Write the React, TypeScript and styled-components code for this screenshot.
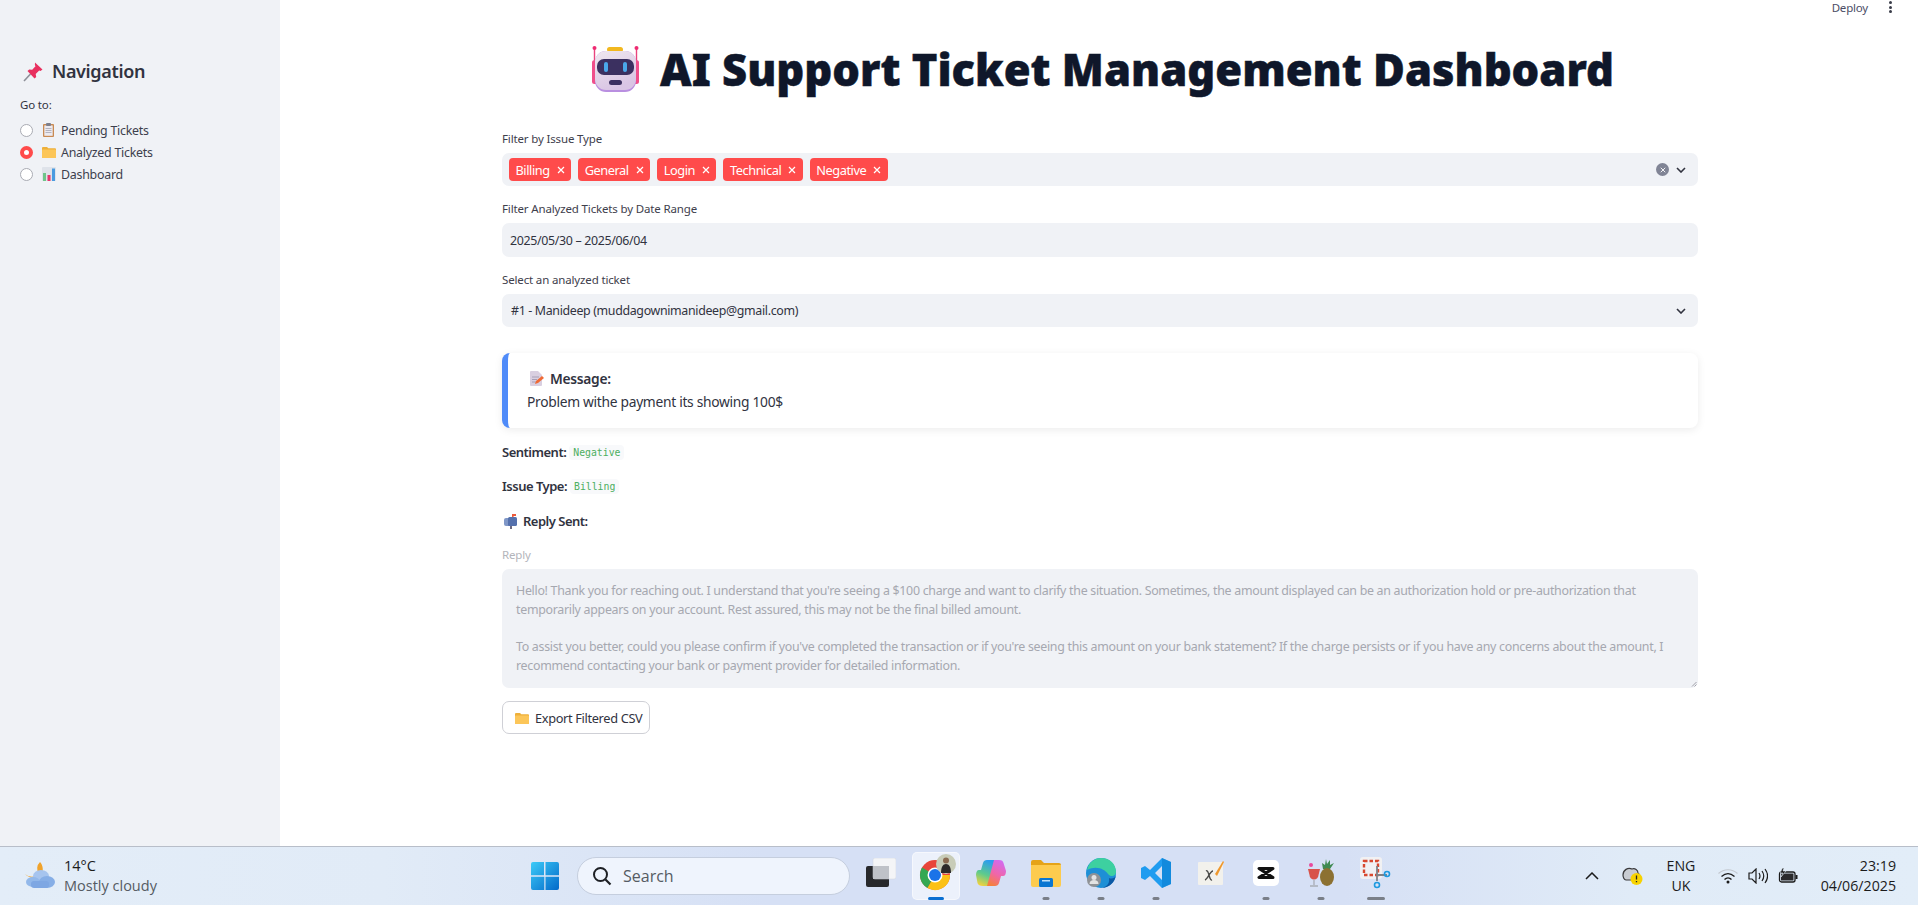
import React from 'react';
import styled, { createGlobalStyle } from 'styled-components';

const GlobalStyle = createGlobalStyle`
  html, body {
    margin: 0;
    padding: 0;
    background: #fff;
    overflow: hidden;
  }
  body {
    font-family: "Noto Sans", "Open Sans", sans-serif;
  }
`;

const Page = styled.div`
  width: 1918px;
  height: 905px;
  display: flex;
  flex-direction: column;
`;

const Upper = styled.div`
  flex: 1;
  display: flex;
  min-height: 0;
`;

const Sidebar = styled.aside`
  width: 280px;
  background: #f0f2f6;
  padding: 57px 0 0 20px;
  box-sizing: border-box;
  color: #31333f;
`;

const NavTitle = styled.div`
  display: flex;
  align-items: center;
  gap: 8px;
  height: 28px;
  margin-left: 3px;
  font-size: 18px;
  font-weight: 600;
  letter-spacing: -0.35px;
`;

const GoTo = styled.div`
  margin-top: 12px;
  font-size: 11.5px;
  line-height: 16px;
  letter-spacing: -0.15px;
`;

const RadioList = styled.div`
  margin-top: 6px;
  display: flex;
  flex-direction: column;
`;

const RadioRow = styled.div`
  height: 22px;
  display: flex;
  align-items: center;
  font-size: 12.4px;
  letter-spacing: -0.25px;
  color: #3d3f4d;
`;

const RadioDot = styled.span<{ $on?: boolean }>`
  width: 13px;
  height: 13px;
  border-radius: 50%;
  box-sizing: border-box;
  background: #fff;
  border: ${(p) => (p.$on ? '4px solid #ff4b4b' : '1px solid #a9abb3')};
  margin-right: 8px;
  flex: none;
`;

const RadioIcon = styled.span`
  width: 15px;
  display: flex;
  justify-content: center;
  margin-right: 5px;
`;

const Main = styled.main`
  flex: 1;
  display: flex;
  flex-direction: column;
  min-width: 0;
`;

const TopBar = styled.div`
  height: 14px;
  display: flex;
  justify-content: flex-end;
  align-items: center;
  padding-right: 26px;
  gap: 21px;
  font-size: 11.5px;
  letter-spacing: -0.2px;
  color: #4b4d66;
`;

const Dots = styled.div`
  display: flex;
  flex-direction: column;
  gap: 1.5px;
  & > span {
    width: 3px;
    height: 3px;
    border-radius: 50%;
    background: #3a3c48;
  }
`;

const Content = styled.div`
  width: 1196px;
  margin-left: 222px;
  color: #31333f;
`;

const Title = styled.h1`
  margin: 29px 0 0;
  height: 52px;
  display: flex;
  align-items: center;
  justify-content: center;
  gap: 21px;
  font-size: 43.5px;
  font-weight: 900;
  color: #0f172a;
  white-space: nowrap;
  -webkit-text-stroke: 0.5px #0f172a;
  padding-left: 6px;
`;

const FieldLabel = styled.div<{ $muted?: boolean }>`
  font-size: 11.5px;
  line-height: 16px;
  letter-spacing: -0.15px;
  color: ${(p) => (p.$muted ? '#b3b5bb' : '#3e404c')};
`;

const Field = styled.div<{ $top: number }>`
  margin-top: ${(p) => p.$top}px;
`;

const InputBox = styled.div<{ $h: number; $pad?: number }>`
  margin-top: 6px;
  height: ${(p) => p.$h}px;
  background: #f0f2f6;
  border-radius: 7px;
  display: flex;
  align-items: center;
  padding: 0 12px 0 ${(p) => p.$pad ?? 8}px;
  font-size: 12.4px;
  letter-spacing: -0.34px;
  color: #31333f;
`;

const Tags = styled.div`
  flex: 1;
  display: flex;
  gap: 7px;
`;

const Tag = styled.span`
  height: 23px;
  background: #ff4b4b;
  color: #fff;
  border-radius: 4px;
  display: flex;
  align-items: center;
  gap: 7px;
  padding: 0 6.5px;
  font-size: 12.8px;
  letter-spacing: -0.45px;
`;

const Grow = styled.span`
  flex: 1;
`;

const ClearBtn = styled.span`
  width: 13px;
  height: 13px;
  border-radius: 50%;
  background: #808495;
  display: flex;
  align-items: center;
  justify-content: center;
  margin-right: 7px;
`;

const Card = styled.section`
  margin-top: 26px;
  height: 75px;
  box-sizing: border-box;
  border-left: 6px solid #4f8bf9;
  border-radius: 8px;
  background: #fff;
  box-shadow: 0 2px 8px rgba(0, 0, 0, 0.08);
  padding: 15px 0 0 19px;
  font-size: 13.8px;
  letter-spacing: -0.3px;
`;

const CardHead = styled.div`
  display: flex;
  align-items: center;
  gap: 6px;
  margin-left: 3px;
  height: 20px;
  font-weight: 600;
`;

const CardText = styled.div`
  margin-top: 4px;
  line-height: 20px;
`;

const InfoRow = styled.div<{ $top: number; $inset?: boolean }>`
  margin-top: ${(p) => p.$top}px;
  margin-left: ${(p) => (p.$inset ? 2 : 0)}px;
  height: 20px;
  display: flex;
  align-items: center;
  gap: ${(p) => (p.$inset ? 5 : 3)}px;
  font-size: 13px;
  font-weight: 600;
  letter-spacing: -0.5px;
`;

const Code = styled.code`
  background: #f8f9fb;
  color: #4cae60;
  border-radius: 4px;
  padding: 2px 4px;
  font-family: "DejaVu Sans Mono", "Liberation Mono", monospace;
  font-size: 9.8px;
  font-weight: 400;
  letter-spacing: 0;
`;

const ReplyBox = styled.div`
  position: relative;
  margin-top: 6px;
  height: 119px;
  box-sizing: border-box;
  background: #f0f2f6;
  border-radius: 7px;
  padding: 13px 14px;
  font-size: 12.4px;
  line-height: 18.7px;
  letter-spacing: -0.29px;
  color: #a6a8b0;
  white-space: pre-line;
`;

const ResizeGrip = styled.svg`
  position: absolute;
  right: 1px;
  bottom: 1px;
`;

const ExportButton = styled.button`
  margin-top: 13px;
  height: 33px;
  width: 148px;
  box-sizing: border-box;
  border: 1px solid #cfd0d6;
  border-radius: 7px;
  background: #fff;
  display: flex;
  align-items: center;
  gap: 6px;
  padding: 0 0 0 12px;
  font-family: inherit;
  font-size: 12.8px;
  letter-spacing: -0.35px;
  color: #31333f;
`;

const Taskbar = styled.footer`
  height: 59px;
  flex: none;
  box-sizing: border-box;
  border-top: 1px solid #b8bec9;
  background: linear-gradient(90deg, #e3edf8 0%, #e1ebf7 20%, #d6e0f5 40%, #d6e0f5 70%, #e0ebf7 85%, #e2edf8 100%);
  display: flex;
  align-items: center;
  font-family: "Open Sans", "Noto Sans", sans-serif;
  color: #1b1b1b;
`;

const Weather = styled.div`
  width: 530px;
  flex: none;
  box-sizing: border-box;
  padding-left: 25px;
  display: flex;
  align-items: center;
  gap: 9px;
`;

const WeatherText = styled.div`
  font-size: 14.5px;
  line-height: 20px;
  & > span {
    display: block;
    color: #555b63;
  }
`;

const TaskCenter = styled.div`
  display: flex;
  align-items: center;
  height: 100%;
`;

const StartCell = styled.div`
  width: 30px;
  margin-right: 17px;
  display: flex;
`;

const SearchPill = styled.div`
  width: 273px;
  height: 38px;
  box-sizing: border-box;
  border: 1px solid #c5cede;
  border-radius: 19px;
  background: #eff4fd;
  display: flex;
  align-items: center;
  gap: 11px;
  padding-left: 14px;
  font-size: 16px;
  color: #555b63;
  margin-right: 3px;
`;

const AppCell = styled.div<{ $active?: boolean }>`
  width: 55px;
  height: 48px;
  box-sizing: border-box;
  position: relative;
  display: flex;
  align-items: center;
  justify-content: center;
  padding-bottom: 6px;
  &::before {
    content: '';
    display: ${(p) => (p.$active ? 'block' : 'none')};
    position: absolute;
    left: 3.5px;
    right: 3.5px;
    top: 0;
    bottom: 0;
    border-radius: 5px;
    background: rgba(255, 255, 255, 0.55);
    border: 1px solid rgba(255, 255, 255, 0.5);
  }
  & > svg {
    position: relative;
  }
`;

const RunDot = styled.span<{ $active?: boolean; $wide?: boolean }>`
  position: absolute;
  bottom: 0;
  left: 50%;
  transform: translateX(-50%);
  height: 3px;
  width: ${(p) => (p.$active ? 16 : p.$wide ? 18 : 7)}px;
  border-radius: 2px;
  background: ${(p) => (p.$active ? '#0a6fd1' : '#7a7f88')};
`;

const Tray = styled.div`
  flex: 1;
  display: flex;
  align-items: center;
  padding-left: 182px;
`;

const ChevronCell = styled.div`
  margin-right: 23px;
  display: flex;
`;

const TrayLang = styled.div`
  width: 44px;
  margin: 0 15px 0 16px;
  text-align: center;
  font-size: 14.2px;
  line-height: 20px;
`;

const TrayIcons = styled.div`
  display: flex;
  align-items: center;
  gap: 10px;
`;

const Clock = styled.div`
  margin-left: auto;
  padding-right: 22px;
  text-align: right;
  font-size: 14.2px;
  line-height: 20px;
`;

/* drawings of the emoji and the taskbar icons */
const PinIcon = () => (
  <svg width="21" height="21" viewBox="0 0 21 21">
    <path d="M1 20l6.500-7" stroke="#8d8f98" strokeWidth="1.600" />
    <path d="M12 1.500l7.500 7-2 1.500-1.300-.5-3.500 3.500.5 3-1.700 1.500L4.500 10l1.700-1.600 3 .4 3.300-3.500-.6-1.400z" fill="#e8305f" />
  </svg>
);
const ClipboardIcon = () => (
  <svg width="11" height="14" viewBox="0 0 11 14">
    <rect x="0" y="1" width="11" height="13" rx="1" fill="#c98a52" />
    <rect x="1.300" y="2.400" width="8.400" height="10.400" fill="#eceaf0" />
    <rect x="3" y="0" width="5" height="3" rx="1" fill="#7d7f8c" />
    <path d="M2.500 5.500h6M2.500 7.500h6M2.500 9.500h6" stroke="#b4b4c0" />
  </svg>
);
const FolderIcon = ({ size = 14 }: { size?: number }) => (
  <svg width={size} height={size} viewBox="0 0 14 14">
    <path d="M0 3a1 1 0 011-1h4l1.300 1.300H13a1 1 0 011 1V12a1 1 0 01-1 1H1a1 1 0 01-1-1z" fill="#eeb03a" />
    <rect x="0" y="4.400" width="14" height="8.600" rx="1" fill="#fcc659" />
  </svg>
);
const ChartIcon = () => (
  <svg width="14" height="14" viewBox="0 0 14 14">
    <rect width="14" height="14" rx="1" fill="#dfe3ea" />
    <rect x="1" y="6" width="3" height="8" fill="#6fc58a" />
    <rect x="5.500" y="8" width="3" height="6" fill="#e8356b" />
    <rect x="10" y="1.500" width="3" height="12.500" fill="#4a9be0" />
  </svg>
);
const RobotIcon = () => (
  <svg width="47" height="46" viewBox="0 0 47 46">
    <defs>
      <linearGradient id="rb" x1="0" y1="0" x2="0.4" y2="1">
        <stop offset="0" stopColor="#efe8ef" />
        <stop offset="1" stopColor="#d9c5e4" />
      </linearGradient>
    </defs>
    <rect x="15" y="1" width="16" height="5" rx="2.500" fill="#f2b81f" />
    <path d="M2.500 14V3M44.500 14V3" stroke="#e8447e" strokeWidth="1.400" />
    <circle cx="2.500" cy="2" r="2" fill="#ee2b72" />
    <circle cx="44.500" cy="2" r="2" fill="#ee2b72" />
    <rect x="0" y="14" width="6" height="24" rx="2.500" fill="#ef4f8b" />
    <rect x="41" y="14" width="6" height="24" rx="2.500" fill="#ef4f8b" />
    <rect x="3" y="5" width="41" height="41" rx="11" fill="#b98fe0" />
    <rect x="3" y="5" width="41" height="39" rx="11" fill="url(#rb)" />
    <rect x="5" y="13" width="37" height="16" rx="7" fill="#3b3060" />
    <rect x="12" y="16" width="4" height="10" rx="2" fill="#4aa8ea" />
    <rect x="31" y="16" width="4" height="10" rx="2" fill="#4aa8ea" />
    <rect x="17" y="34" width="13" height="5" rx="2.500" fill="#3b3060" />
  </svg>
);
const MemoIcon = () => (
  <svg width="14" height="15" viewBox="0 0 14 15">
    <path d="M0 1a1 1 0 011-1h7l4 4v10a1 1 0 01-1 1H1a1 1 0 01-1-1z" fill="#d9cfe0" />
    <path d="M2 6h7M2 8.500h5M2 11h4" stroke="#a79fb6" />
    <path d="M5 13l1-3 6-5 2 2-6 5z" fill="#f06a35" />
  </svg>
);
const MailboxIcon = () => (
  <svg width="14" height="15" viewBox="0 0 14 15">
    <rect x="8" y="0" width="1.600" height="4" fill="#ee5a3a" />
    <rect x="9" y="0" width="3" height="2" fill="#ee5a3a" />
    <rect x="6" y="10" width="2" height="5" fill="#6d6a80" />
    <rect x="0" y="4" width="7" height="8" rx="2" fill="#7f97c7" />
    <rect x="4" y="3" width="9" height="9" rx="1.500" fill="#5571ad" />
  </svg>
);
const Cross = ({ color = '#fff', size = 8 }: { color?: string; size?: number }) => (
  <svg width={size} height={size} viewBox="0 0 8 8">
    <path d="M1 1l6 6M7 1L1 7" stroke={color} strokeWidth="1.200" />
  </svg>
);
const Chevron = () => (
  <svg width="10" height="6" viewBox="0 0 10 6">
    <path d="M1 1l4 4 4-4" fill="none" stroke="#31333f" strokeWidth="1.600" />
  </svg>
);
const WeatherIcon = () => (
  <svg width="30" height="30" viewBox="0 0 30 30">
    <path d="M15 1a9 9 0 00-1 12A10 10 0 010 13c3 4 12 6 16 1 3-4 2-10-1-13z" fill="#f0a32c" />
    <ellipse cx="16" cy="15" rx="8" ry="6" fill="#a6c4ee" />
    <ellipse cx="8" cy="21" rx="7" ry="5" fill="#92b8ea" />
    <ellipse cx="22" cy="21" rx="8" ry="6" fill="#86aee6" />
    <rect x="6" y="20" width="18" height="7" rx="3" fill="#7ea7e3" />
  </svg>
);
const WindowsIcon = () => (
  <svg width="30" height="30" viewBox="0 0 30 30">
    <defs>
      <linearGradient id="win" x1="0" y1="0" x2="1" y2="1">
        <stop offset="0" stopColor="#3ccbf8" />
        <stop offset="1" stopColor="#0369c9" />
      </linearGradient>
    </defs>
    <path d="M1 3a2 2 0 012-2h11v13.300H1zM15.500 1H27a2 2 0 012 2v11.300H15.500zM1 15.700h13.300V29H3a2 2 0 01-2-2zM15.500 15.700H29V27a2 2 0 01-2 2H15.500z" fill="url(#win)" />
  </svg>
);
const SearchIcon = () => (
  <svg width="20" height="20" viewBox="0 0 20 20">
    <circle cx="8.500" cy="8.500" r="6.500" fill="none" stroke="#1e2025" strokeWidth="2" />
    <path d="M13.500 13.500l5 5" stroke="#1e2025" strokeWidth="2.200" />
  </svg>
);
const TaskViewIcon = () => (
  <svg width="30" height="30" viewBox="0 0 30 30">
    <rect x="0" y="8" width="23" height="21" rx="2" fill="#27282b" />
    <rect x="7" y="0" width="23" height="21" rx="2" fill="#f4f5f7" stroke="#d2d6de" strokeWidth=".5" />
    <rect x="7" y="8" width="16" height="13" fill="#bfc2c8" />
  </svg>
);
const ChromeIcon = () => (
  <svg width="40" height="40" viewBox="0 0 40 40">
    <circle cx="19" cy="22" r="15" fill="#e8453a" />
    <path d="M19 22L6 14.500A15 15 0 0011.500 35z" fill="#34a853" />
    <path d="M19 22l-7.500 13A15 15 0 0034 22z" fill="#fbc116" />
    <circle cx="19" cy="22" r="7.500" fill="#fff" />
    <circle cx="19" cy="22" r="6" fill="#1a73e8" />
    <circle cx="30" cy="11" r="10" fill="#c8ccb8" />
    <path d="M25 20c0-6 2-9 5-9s5 3 5 9z" fill="#2d2b2a" />
    <circle cx="30" cy="7.500" r="3" fill="#8a6a50" />
  </svg>
);
const CopilotIcon = () => (
  <svg width="30" height="28" viewBox="0 0 30 28">
    <defs>
      <linearGradient id="copA" x1="0.600" y1="0" x2="0.300" y2="1">
        <stop offset="0" stopColor="#2b9cf0" />
        <stop offset=".55" stopColor="#5ecb8c" />
        <stop offset="1" stopColor="#f4d23c" />
      </linearGradient>
      <linearGradient id="copB" x1="0.700" y1="0" x2="0.300" y2="1">
        <stop offset="0" stopColor="#d26bf0" />
        <stop offset=".55" stopColor="#f066a8" />
        <stop offset="1" stopColor="#f5803c" />
      </linearGradient>
    </defs>
    <path d="M11 1h8l-7 26H7c-3 0-5-1-5.500-3L0 16c0-3 1-5 3-5h2l2-7c.5-2 2-3 4-3z" fill="url(#copA)" />
    <path d="M19 27h-8l7-26h5c3 0 4 1 4.500 3L30 12c0 3-1 5-3 5h-2l-2 7c-.5 2-2 3-4 3z" fill="url(#copB)" />
  </svg>
);
const ExplorerIcon = () => (
  <svg width="30" height="27" viewBox="0 0 30 27">
    <path d="M0 2a2 2 0 012-2h8l3 3h15a2 2 0 012 2v4H0z" fill="#e5a318" />
    <path d="M0 5h30v20a2 2 0 01-2 2H2a2 2 0 01-2-2z" fill="#fdcb4e" />
    <rect x="8" y="18" width="14" height="9" rx="1.500" fill="#0a76d2" />
    <rect x="11" y="20" width="8" height="1.500" fill="#bfe0f8" />
  </svg>
);
const EdgeIcon = () => (
  <svg width="30" height="30" viewBox="0 0 30 30">
    <circle cx="15" cy="15" r="15" fill="#1e8fd6" />
    <path d="M1 12C3 3 10 0 15 0c9 0 15 6 15 14 0 5-6 5-8 2-3-5-12-9-21-4z" fill="#3dd0a0" />
    <path d="M30 17c-1 8-8 13-14 13 3-1 8-3 7-10 2 1 6 1 7-3z" fill="#0c59a4" />
    <circle cx="8" cy="22" r="7" fill="#8f9296" />
    <circle cx="8" cy="19.500" r="2.500" fill="#e3e3e3" />
    <path d="M3.500 26c0-3 2-4 4.500-4s4.500 1 4.500 4z" fill="#e3e3e3" />
  </svg>
);
const VscodeIcon = () => (
  <svg width="30" height="30" viewBox="0 0 30 30">
    <path d="M21 0l9 4v22l-9 4L9 18l-5 4-4-2V10l4-2 5 4zM21 8l-7 7 7 7z" fill="#1f9cf0" />
    <path d="M21 0l9 4v22l-9 4z" fill="#0a7fd0" opacity=".6" />
  </svg>
);
const TexIcon = () => (
  <svg width="26" height="24" viewBox="0 0 26 24">
    <rect y="1" width="25" height="23" rx="1" fill="#f2f1ec" />
    <path d="M8 10c3-2 3 10 6 9M15 10c-3 0-5 8-8 9" fill="none" stroke="#4a4a48" strokeWidth="1.400" />
    <path d="M17 13L25 0l1 1-7 14z" fill="#f0982c" />
  </svg>
);
const CapcutIcon = () => (
  <svg width="26" height="26" viewBox="0 0 26 26">
    <rect width="26" height="26" rx="5" fill="#fff" />
    <path d="M6 8.500H20L6 17.500H20z" fill="none" stroke="#111" strokeWidth="3" strokeLinejoin="round" />
  </svg>
);
const PineappleIcon = () => (
  <svg width="28" height="29" viewBox="0 0 28 29">
    <path d="M19 0l1 5 3-4 0 5 4-2-4 6h-7l-1-6 3 2z" fill="#3f8a52" />
    <ellipse cx="20" cy="18" rx="7" ry="9" fill="#8c7132" />
    <path d="M1 10h12l-1.500 6a4.500 4.500 0 01-9 0z" fill="#d8534a" />
    <path d="M7 21v5M3 27h8" stroke="#a9adb5" strokeWidth="1.300" />
    <circle cx="4" cy="6" r="2" fill="#e84a9c" />
  </svg>
);
const SnipIcon = () => (
  <svg width="31" height="32" viewBox="0 0 31 32">
    <rect x="0" y="0" width="22" height="22" rx="3" fill="#f1f1f3" />
    <rect x="4" y="4" width="14" height="14" fill="none" stroke="#d8492f" strokeWidth="2.400" strokeDasharray="3.500 2" />
    <path d="M17 9v15M17 18h10" stroke="#7f8288" strokeWidth="1.800" />
    <circle cx="27" cy="17" r="2.500" fill="none" stroke="#1d9ae0" strokeWidth="1.600" />
    <circle cx="17" cy="28" r="2.500" fill="none" stroke="#1d9ae0" strokeWidth="1.600" />
  </svg>
);
const TrayChevron = () => (
  <svg width="14" height="8" viewBox="0 0 14 8">
    <path d="M1 7l6-6 6 6" fill="none" stroke="#1b1b1b" strokeWidth="1.500" />
  </svg>
);
const OneDriveIcon = () => (
  <svg width="21" height="20" viewBox="0 0 21 20">
    <path d="M1 9c0-5 5-8 9-6 3-1 6 1 6 4 2 1 2 7-1 7H4C2 14 1 11 1 9z" fill="#c8ccd2" stroke="#3a3a3c" strokeWidth="1.200" />
    <circle cx="14.500" cy="13" r="6" fill="#f7d200" />
    <path d="M14.500 9.500v4M14.500 15v1.300" stroke="#222" strokeWidth="1.300" />
  </svg>
);
const WifiIcon = () => (
  <svg width="20" height="16" viewBox="0 0 20 16">
    <path d="M0.500 5.500C6 .5 14 .5 19.500 5.500" fill="none" stroke="#c3c8d0" strokeWidth="1.200" />
    <path d="M3.500 8.500c4-3.500 9-3.500 13 0M6.500 11.500c2-2 5-2 7 0" fill="none" stroke="#1b1b1b" strokeWidth="1.300" />
    <circle cx="10" cy="14" r="1.500" fill="#1b1b1b" />
  </svg>
);
const SpeakerIcon = () => (
  <svg width="20" height="16" viewBox="0 0 20 16">
    <path d="M1 5h3l4-4v14l-4-4H1z" fill="none" stroke="#1b1b1b" strokeWidth="1.200" />
    <path d="M11 5c1.300 2 1.300 4 0 6M14 3c2.300 3.300 2.300 6.700 0 10M17 1c3.300 4.500 3.300 9.500 0 14" fill="none" stroke="#1b1b1b" strokeWidth="1.200" />
  </svg>
);
const BatteryIcon = () => (
  <svg width="20" height="16" viewBox="0 0 20 16">
    <rect x="1.500" y="4" width="15.500" height="10" rx="2" fill="none" stroke="#1b1b1b" strokeWidth="1.300" />
    <rect x="3" y="5.500" width="12.500" height="7" fill="#2a2a2c" />
    <rect x="17.500" y="7" width="2" height="4" fill="#1b1b1b" />
    <path d="M4.500 0L2 5h3l-2 4 5-6H5l1-3z" fill="#1b1b1b" stroke="#e1ecf7" strokeWidth=".6" />
  </svg>
);

const issueTags = ['Billing', 'General', 'Login', 'Technical', 'Negative'];

const navItems = [
  { label: 'Pending Tickets', icon: <ClipboardIcon /> },
  { label: 'Analyzed Tickets', icon: <FolderIcon />, on: true },
  { label: 'Dashboard', icon: <ChartIcon /> },
];

const apps = [
  { key: 'task', icon: <TaskViewIcon /> },
  { key: 'chrome', icon: <ChromeIcon />, active: true },
  { key: 'copilot', icon: <CopilotIcon /> },
  { key: 'explorer', icon: <ExplorerIcon />, run: true },
  { key: 'edge', icon: <EdgeIcon />, run: true },
  { key: 'vscode', icon: <VscodeIcon />, run: true },
  { key: 'tex', icon: <TexIcon /> },
  { key: 'capcut', icon: <CapcutIcon />, run: true },
  { key: 'pine', icon: <PineappleIcon />, run: true },
  { key: 'snip', icon: <SnipIcon />, run: true, wide: true },
];

const replyText = `Hello! Thank you for reaching out. I understand that you're seeing a $100 charge and want to clarify the situation. Sometimes, the amount displayed can be an authorization hold or pre-authorization that temporarily appears on your account. Rest assured, this may not be the final billed amount.

To assist you better, could you please confirm if you've completed the transaction or if you're seeing this amount on your bank statement? If the charge persists or if you have any concerns about the amount, I recommend contacting your bank or payment provider for detailed information.`;

const App: React.FC = () => {
  return (
    <Page>
      <GlobalStyle />
      <Upper>
        <Sidebar>
          <NavTitle>
            <PinIcon />
            Navigation
          </NavTitle>
          <GoTo>Go to:</GoTo>
          <RadioList>
            {navItems.map((item) => (
              <RadioRow key={item.label}>
                <RadioDot $on={item.on} />
                <RadioIcon>{item.icon}</RadioIcon>
                {item.label}
              </RadioRow>
            ))}
          </RadioList>
        </Sidebar>
        <Main>
          <TopBar>
            Deploy
            <Dots>
              <span />
              <span />
              <span />
            </Dots>
          </TopBar>
          <Content>
            <Title>
              <RobotIcon />
              AI Support Ticket Management Dashboard
            </Title>
            <Field $top={36}>
              <FieldLabel>Filter by Issue Type</FieldLabel>
              <InputBox $h={33} $pad={7}>
                <Tags>
                  {issueTags.map((tag) => (
                    <Tag key={tag}>
                      {tag}
                      <Cross />
                    </Tag>
                  ))}
                </Tags>
                <ClearBtn>
                  <Cross size={6} />
                </ClearBtn>
                <Chevron />
              </InputBox>
            </Field>
            <Field $top={15}>
              <FieldLabel>Filter Analyzed Tickets by Date Range</FieldLabel>
              <InputBox $h={34}>2025/05/30 – 2025/06/04</InputBox>
            </Field>
            <Field $top={15}>
              <FieldLabel>Select an analyzed ticket</FieldLabel>
              <InputBox $h={33} $pad={9}>
                #1 - Manideep (muddagownimanideep@gmail.com)
                <Grow />
                <Chevron />
              </InputBox>
            </Field>
            <Card>
              <CardHead>
                <MemoIcon />
                Message:
              </CardHead>
              <CardText>Problem withe payment its showing 100$</CardText>
            </Card>
            <InfoRow $top={14}>
              Sentiment:
              <Code>Negative</Code>
            </InfoRow>
            <InfoRow $top={14}>
              Issue Type:
              <Code>Billing</Code>
            </InfoRow>
            <InfoRow $top={15} $inset>
              <MailboxIcon />
              Reply Sent:
            </InfoRow>
            <Field $top={16}>
              <FieldLabel $muted>Reply</FieldLabel>
              <ReplyBox>
                {replyText}
                <ResizeGrip width="6" height="6" viewBox="0 0 6 6">
                  <path d="M1 5.500L5.500 1M3.500 5.500L5.500 3.500" stroke="#8a8c94" strokeWidth=".8" />
                </ResizeGrip>
              </ReplyBox>
            </Field>
            <ExportButton>
              <FolderIcon />
              Export Filtered CSV
            </ExportButton>
          </Content>
        </Main>
      </Upper>
      <Taskbar>
        <Weather>
          <WeatherIcon />
          <WeatherText>
            14°C
            <span>Mostly cloudy</span>
          </WeatherText>
        </Weather>
        <TaskCenter>
          <StartCell>
            <WindowsIcon />
          </StartCell>
          <SearchPill>
            <SearchIcon />
            Search
          </SearchPill>
          {apps.map((app) => (
            <AppCell key={app.key} $active={app.active}>
              {app.icon}
              {(app.run || app.active) && <RunDot $active={app.active} $wide={app.wide} />}
            </AppCell>
          ))}
        </TaskCenter>
        <Tray>
          <ChevronCell>
            <TrayChevron />
          </ChevronCell>
          <OneDriveIcon />
          <TrayLang>
            ENG
            <br />
            UK
          </TrayLang>
          <TrayIcons>
            <WifiIcon />
            <SpeakerIcon />
            <BatteryIcon />
          </TrayIcons>
          <Clock>
            23:19
            <br />
            04/06/2025
          </Clock>
        </Tray>
      </Taskbar>
    </Page>
  );
};

export default App;
